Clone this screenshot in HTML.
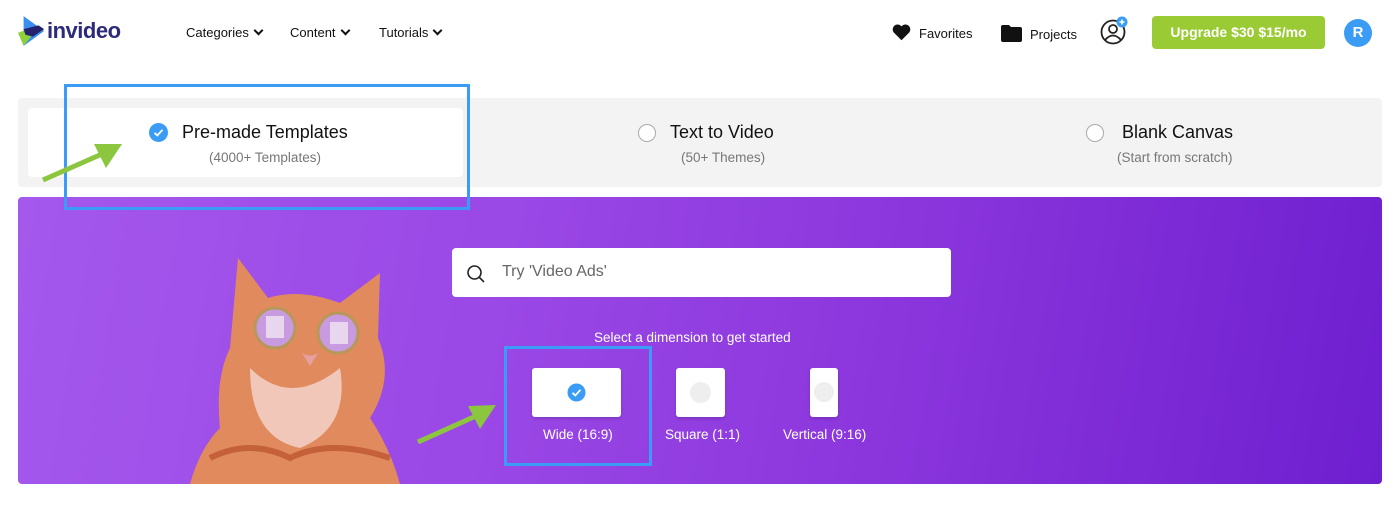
<!DOCTYPE html>
<html><head><meta charset="utf-8"><style>
*{margin:0;padding:0;box-sizing:border-box}
body{width:1400px;height:507px;background:#fff;font-family:"Liberation Sans",sans-serif;position:relative;overflow:hidden;color:#111}
.a{position:absolute}
.nav{font-size:13px;color:#111}
.chev{display:inline-block;width:7px;height:7px;border-right:2px solid #111;border-bottom:2px solid #111;transform:rotate(45deg);margin-left:6px;position:relative;top:-3px}
.radio{width:18px;height:18px;border-radius:50%;border:1.5px solid #aaa;background:#fff}
.tabt{font-size:18px;color:#111}
.tabs{font-size:13.5px;color:#777}
.card{background:#fff;border-radius:3px;box-shadow:0 2px 3px rgba(0,0,0,.15)}
.lbl{color:#fff;font-size:13.5px}
</style></head><body>
<svg class="a" style="left:18px;top:15px" width="28" height="32" viewBox="0 0 30 32">
<polygon points="6,0 6,32 28,16" fill="#3b8ef0"/>
<polygon points="0,18 10,14 26,16 14,22 6,32" fill="#8fcf3a"/>
<polygon points="6,14 22,10 28,14 16,22 8,20" fill="#26236e"/>
</svg>
<div class="a" style="left:47px;top:18px;font-size:22px;font-weight:bold;color:#2d2a7a;letter-spacing:-0.5px">invideo</div>
<div class="a nav" style="left:186px;top:25px">Categories<span class="chev"></span></div>
<div class="a nav" style="left:290px;top:25px">Content<span class="chev"></span></div>
<div class="a nav" style="left:379px;top:25px">Tutorials<span class="chev"></span></div>
<svg class="a" style="left:892px;top:24px" width="19" height="17" viewBox="0 0 24 22"><path d="M12 21 L2 11 A5.5 5.5 0 0 1 12 3 A5.5 5.5 0 0 1 22 11 Z" fill="#111"/></svg>
<div class="a nav" style="left:919px;top:26px">Favorites</div>
<svg class="a" style="left:1001px;top:25px" width="21" height="17" viewBox="0 0 21 17"><path d="M0 2 Q0 0 2 0 H8 L10 2 H19 Q21 2 21 4 V15 Q21 17 19 17 H2 Q0 17 0 15Z" fill="#111"/></svg>
<div class="a nav" style="left:1030px;top:27px">Projects</div>
<svg class="a" style="left:1099px;top:15px" width="30" height="30" viewBox="0 0 30 30"><circle cx="14" cy="17" r="11.5" fill="none" stroke="#222" stroke-width="1.8"/><circle cx="14" cy="14" r="4" fill="none" stroke="#222" stroke-width="1.8"/><path d="M6 25 Q14 16 22 25" fill="none" stroke="#222" stroke-width="1.8"/><circle cx="23" cy="7" r="5.5" fill="#3b9cf5"/><path d="M23 4.5V9.5M20.5 7H25.5" stroke="#fff" stroke-width="1.6"/></svg>
<div class="a" style="left:1152px;top:16px;width:173px;height:33px;background:#9acb34;border-radius:4px;color:#fff;font-size:14px;font-weight:bold;text-align:center;line-height:33px">Upgrade $30 $15/mo</div>
<div class="a" style="left:1344px;top:19px;width:28px;height:28px;border-radius:50%;background:#3b9cf5;color:#fff;font-size:15px;font-weight:bold;text-align:center;line-height:28px">R</div>

<div class="a" style="left:18px;top:98px;width:1364px;height:89px;background:#f3f3f3;border-radius:4px"></div>
<div class="a" style="left:28px;top:108px;width:435px;height:69px;background:#fff;border-radius:4px"></div>
<svg class="a" style="left:149px;top:123px" width="19" height="19" viewBox="0 0 19 19"><circle cx="9.5" cy="9.5" r="9.5" fill="#3b9cf5"/><path d="M5.5 9.8 L8.3 12.5 L13.5 6.8" fill="none" stroke="#fff" stroke-width="1.8"/></svg>
<div class="a tabt" style="left:182px;top:122px">Pre-made Templates</div>
<div class="a tabs" style="left:209px;top:150px">(4000+ Templates)</div>
<div class="a radio" style="left:638px;top:124px"></div>
<div class="a tabt" style="left:670px;top:122px">Text to Video</div>
<div class="a tabs" style="left:681px;top:150px">(50+ Themes)</div>
<div class="a radio" style="left:1086px;top:124px"></div>
<div class="a tabt" style="left:1122px;top:122px">Blank Canvas</div>
<div class="a tabs" style="left:1117px;top:150px">(Start from scratch)</div>

<div class="a" style="left:18px;top:197px;width:1364px;height:287px;border-radius:4px;background:linear-gradient(100deg,#a458ec 0%,#9a48e6 35%,#8a35dc 65%,#6e1fcf 100%)"></div>
<svg class="a" style="left:190px;top:258px" width="215" height="226" viewBox="0 0 215 226">
<path d="M48 0 L78 40 Q110 30 150 45 L190 15 L188 80 Q205 120 180 160 Q200 190 210 226 H0 Q10 190 30 170 Q25 120 40 90 Z" fill="#e08a5e"/>
<path d="M60 110 Q100 150 150 110 Q160 170 110 190 Q60 180 60 110Z" fill="#f0c7b8"/>
<path d="M20 200 Q60 180 100 200 Q140 180 200 200" stroke="#c4603a" stroke-width="6" fill="none"/>
<circle cx="85" cy="70" r="20" fill="#c89be0" stroke="#b8985a" stroke-width="3"/>
<circle cx="148" cy="75" r="20" fill="#c89be0" stroke="#b8985a" stroke-width="3"/>
<rect x="76" y="58" width="18" height="22" fill="#e8d5ee"/><rect x="140" y="64" width="18" height="22" fill="#e8d5ee"/>
<path d="M112 95 Q120 100 128 95 L120 108Z" fill="#e6a0a0"/>
</svg>
<div class="a" style="left:452px;top:248px;width:499px;height:49px;background:#fff;border-radius:4px"></div>
<svg class="a" style="left:466px;top:264px" width="20" height="20" viewBox="0 0 20 20"><circle cx="8.5" cy="8.5" r="6.5" fill="none" stroke="#222" stroke-width="1.6"/><path d="M13.3 13.3 L18 18" stroke="#222" stroke-width="1.6"/></svg>
<div class="a" style="left:502px;top:263px;font-size:16px;color:#666">Try 'Video Ads'</div>
<div class="a lbl" style="left:594px;top:330px">Select a dimension to get started</div>
<div class="a card" style="left:532px;top:368px;width:89px;height:49px"></div>
<svg class="a" style="left:567px;top:383px" width="19" height="19" viewBox="0 0 19 19"><circle cx="9.5" cy="9.5" r="9" fill="#3b9cf5"/><path d="M5.5 9.8 L8.3 12.5 L13.5 6.8" fill="none" stroke="#fff" stroke-width="1.8"/></svg>
<div class="a card" style="left:676px;top:368px;width:49px;height:49px"></div>
<div class="a" style="left:690px;top:382px;width:21px;height:21px;border-radius:50%;background:#eee"></div>
<div class="a card" style="left:810px;top:368px;width:28px;height:49px"></div>
<div class="a" style="left:814px;top:382px;width:20px;height:20px;border-radius:50%;background:#eee"></div>
<div class="a lbl" style="left:543px;top:427px">Wide (16:9)</div>
<div class="a lbl" style="left:665px;top:427px">Square (1:1)</div>
<div class="a lbl" style="left:783px;top:427px">Vertical (9:16)</div>

<div class="a" style="left:64px;top:84px;width:406px;height:126px;border:3px solid #3b9cf5"></div>
<div class="a" style="left:504px;top:346px;width:148px;height:120px;border:3px solid #3b9cf5"></div>
<svg class="a" style="left:40px;top:138px" width="86" height="46" viewBox="0 0 86 46"><path d="M3 42 L62 16" stroke="#8cc63f" stroke-width="5"/><polygon points="82,6 54,6 66,30" fill="#8cc63f"/></svg>
<svg class="a" style="left:414px;top:402px" width="86" height="46" viewBox="0 0 86 46"><path d="M4 40 L62 14" stroke="#8cc63f" stroke-width="5"/><polygon points="82,3 54,4 66,27" fill="#8cc63f"/></svg>
</body></html>
